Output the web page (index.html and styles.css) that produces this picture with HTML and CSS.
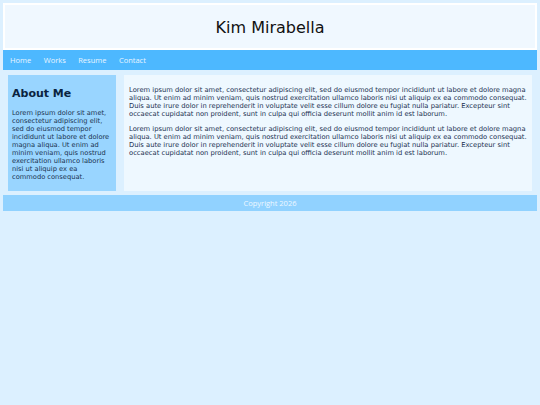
FILE: index.html
```html
<!DOCTYPE html>
<html>
<head>
<meta charset="utf-8">
<link rel="stylesheet" href="styles.css">
</head>
<body>
<div class="page">
  <header class="header"><h1 class="title">Kim Mirabella</h1></header>
  <nav class="nav">
    <a class="nav-link" href="#">Home</a>
    <a class="nav-link" href="#">Works</a>
    <a class="nav-link" href="#">Resume</a>
    <a class="nav-link" href="#">Contact</a>
  </nav>
  <div class="main">
    <aside class="sidebar">
      <h2 class="sidebar-title">About Me</h2>
      <p class="sidebar-text">Lorem ipsum dolor sit amet, consectetur adipiscing elit, sed do eiusmod tempor incididunt ut labore et dolore magna aliqua. Ut enim ad minim veniam, quis nostrud exercitation ullamco laboris nisi ut aliquip ex ea commodo consequat.</p>
    </aside>
    <section class="content">
      <p class="para">Lorem ipsum dolor sit amet, consectetur adipiscing elit, sed do eiusmod tempor incididunt ut labore et dolore magna aliqua. Ut enim ad minim veniam, quis nostrud exercitation ullamco laboris nisi ut aliquip ex ea commodo consequat. Duis aute irure dolor in reprehenderit in voluptate velit esse cillum dolore eu fugiat nulla pariatur. Excepteur sint occaecat cupidatat non proident, sunt in culpa qui officia deserunt mollit anim id est laborum.</p>
      <p class="para">Lorem ipsum dolor sit amet, consectetur adipiscing elit, sed do eiusmod tempor incididunt ut labore et dolore magna aliqua. Ut enim ad minim veniam, quis nostrud exercitation ullamco laboris nisi ut aliquip ex ea commodo consequat. Duis aute irure dolor in reprehenderit in voluptate velit esse cillum dolore eu fugiat nulla pariatur. Excepteur sint occaecat cupidatat non proident, sunt in culpa qui officia deserunt mollit anim id est laborum.</p>
    </section>
  </div>
  <footer class="footer">Copyright 2026</footer>
</div>
</body>
</html>
```

FILE: styles.css
```css
html, body {
  margin: 0;
  padding: 0;
  background: #dcf0ff;
}
body {
  font-family: "DejaVu Sans", Verdana, sans-serif;
  padding: 3px;
}
.page {
  display: flex;
  flex-direction: column;
}
.header {
  background: #f0f8ff;
  border: 2px solid #ffffff;
  height: 43px;
  display: flex;
  align-items: center;
  justify-content: center;
}
.title {
  margin: 0;
  font-size: 16px;
  font-weight: normal;
  color: #111;
  padding-top: 1px;
}
.nav {
  background: #4db8ff;
  height: 20px;
  display: flex;
  align-items: center;
  padding-left: 7px;
  font-family: "Open Sans", sans-serif;
}
.nav-link {
  color: #e8f5ff;
  text-decoration: none;
  font-size: 7.5px;
  margin-right: 12.5px;
}
.main {
  display: flex;
  gap: 8px;
  padding: 5px 5px 4px 5px;
  align-items: stretch;
}
.sidebar {
  width: 108px;
  flex: none;
  background: #99d5ff;
  padding: 4px 4px;
  box-sizing: border-box;
  color: #0f2a4a;
}
.sidebar-title {
  font-size: 11px;
  margin: 8px 0 9px 0;
  color: #0a2340;
}
.sidebar-text {
  font-size: 6.7px;
  line-height: 8px;
  margin: 0;
  color: #1a3350;
}
.content {
  flex: 1;
  background: #eef8ff;
  padding: 4px 5px 30px 5px;
  height: 116px;
  box-sizing: border-box;
}
.para {
  font-size: 6.75px;
  line-height: 8px;
  margin: 7px 0;
  color: #1a3050;
}
.footer {
  background: #91d2ff;
  height: 16px;
  display: flex;
  align-items: center;
  justify-content: center;
  color: #eef8ff;
  font-size: 7.5px;
  font-family: "Open Sans", sans-serif;
}
```
